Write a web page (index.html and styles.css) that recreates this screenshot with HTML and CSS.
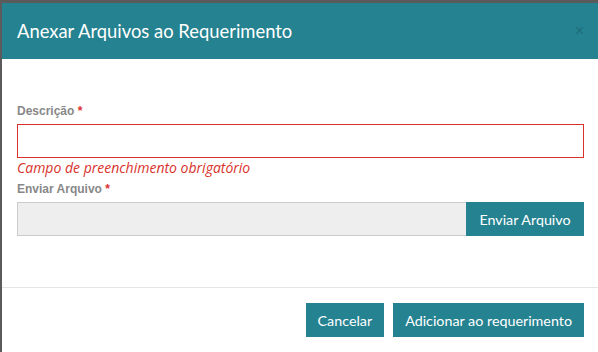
FILE: index.html
```html
<!DOCTYPE html>
<html lang="pt-BR">
<head>
    <meta charset="UTF-8">
    <title>Anexar Arquivos</title>
    <link rel="stylesheet" href="styles.css">
</head>
<body>
    <div class="modal_box">
        <div class="modal_header">
            <span class="modal_title">Anexar Arquivos ao Requerimento</span>
            <span class="modal_close">&times;</span>
        </div>
        <div class="modal_body">
            <div class="form_group">
                <label class="form_label">Descrição <span class="req">*</span></label>
                <input type="text" class="form_input input_error">
                <div class="error_text">Campo de preenchimento obrigatório</div>
            </div>
            <div class="form_group">
                <label class="form_label">Enviar Arquivo <span class="req">*</span></label>
                <div class="file_group">
                    <div class="file_name"></div>
                    <button class="btn_teal file_btn">Enviar Arquivo</button>
                </div>
            </div>
        </div>
        <div class="modal_footer">
            <button class="btn_teal">Cancelar</button>
            <button class="btn_teal">Adicionar ao requerimento</button>
        </div>
    </div>
</body>
</html>
```

FILE: styles.css
```css
html,body{
    margin:0;
    padding:0;
    height:100%;
    background:#5b5b5b;
}
.modal_box{
    margin:3px 0 0 2px;
    height:349px;
    background:#ffffff;
    font-family:"Lato","Liberation Sans",sans-serif;
}
.modal_header{
    display:flex;
    align-items:center;
    justify-content:space-between;
    box-sizing:border-box;
    height:56px;
    padding:0 14px 0 15px;
    background:#258290;
}
.modal_title{
    color:#ffffff;
    font-size:18.4px;
}
.modal_close{
    color:#1e6e7b;
    font-size:16px;
    font-family:"Liberation Sans",sans-serif;
}
.modal_body{
    padding:45px 14px 0 15px;
    height:183px;
    border-bottom:1px solid #e5e5e5;
}
.form_label{
    display:block;
    color:#888888;
    font-family:"Liberation Sans",sans-serif;
    font-weight:700;
    font-size:12px;
    margin-bottom:6px;
}
.req{
    color:#e03030;
}
.form_input{
    display:block;
    box-sizing:border-box;
    width:100%;
    height:34px;
    margin:0;
    border:1px solid #cccccc;
    outline:none;
}
.form_input.input_error{
    border-color:#d9322b;
}
.error_text{
    color:#d9322b;
    font-style:italic;
    font-size:14px;
    line-height:18px;
    font-family:"Open Sans","Liberation Sans",sans-serif;
    margin:1px 0 5px;
}
.file_group{
    display:flex;
    height:34px;
}
.file_name{
    flex:1;
    box-sizing:border-box;
    border:1px solid #cccccc;
    border-right:none;
    background:#eeeeee;
}
.btn_teal{
    border:none;
    margin:0;
    padding:0 12px;
    height:34px;
    background:#258290;
    color:#ffffff;
    font-family:"Lato","Liberation Sans",sans-serif;
    font-size:14.3px;
}
.file_btn{
    width:118px;
}
.modal_footer{
    display:flex;
    justify-content:flex-end;
    gap:9px;
    padding:15px 14px 0 0;
}
```
